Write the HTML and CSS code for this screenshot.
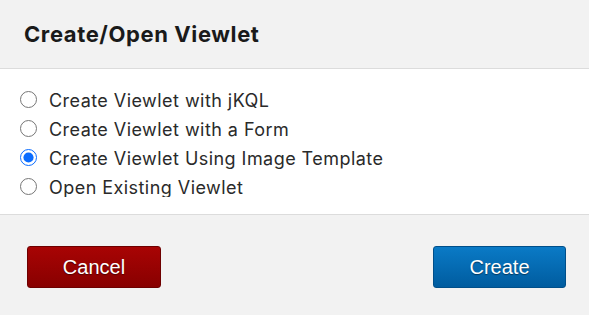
FILE: index.html
```html
<!DOCTYPE html>
<html>
<head>
<meta charset="utf-8">
<link rel="stylesheet" href="styles.css">
</head>
<body>
<div class="dialog">
  <div class="header"><h1 class="title">Create/Open Viewlet</h1></div>
  <div class="content">
    <div class="options">
      <label class="option"><input type="radio" name="mode"><span>Create Viewlet with jKQL</span></label>
      <label class="option"><input type="radio" name="mode"><span>Create Viewlet with a Form</span></label>
      <label class="option"><input type="radio" name="mode" checked><span>Create Viewlet Using Image Template</span></label>
      <label class="option"><input type="radio" name="mode"><span>Open Existing Viewlet</span></label>
    </div>
  </div>
  <div class="footer">
    <button class="btn btn-cancel">Cancel</button>
    <button class="btn btn-create">Create</button>
  </div>
</div>
</body>
</html>
```
FILE: styles.css
```css
html, body {
  margin: 0;
  padding: 0;
  background: #ffffff;
}
.dialog {
  width: 589px;
  height: 315px;
  display: flex;
  flex-direction: column;
  font-family: Inter, "Noto Sans", sans-serif;
  color: #222;
}
.header {
  background: #f2f2f2;
  height: 69px;
  border-bottom: 1px solid #dcdcdc;
  display: flex;
  align-items: center;
  padding: 0 0 1px 24px;
  box-sizing: border-box;
  flex: none;
}
.title {
  margin: 0;
  font-size: 22px;
  font-weight: 700;
  color: #1a1a1a;
  letter-spacing: 0.6px;
}
.content {
  height: 146px;
  flex: none;
  box-sizing: border-box;
  border-bottom: 1px solid #dcdcdc;
  padding: 16px 0 0 20px;
}
.options {
  height: 112px;
  overflow: hidden;
  display: flex;
  flex-direction: column;
}
.option {
  display: flex;
  align-items: center;
  gap: 12px;
  height: 29px;
  flex: none;
  font-size: 18px;
  letter-spacing: 0.45px;
  color: #2a2a2a;
}
.option span {
  padding-top: 2px;
}
.option input {
  width: 17px;
  height: 17px;
  margin: 0;
  accent-color: #0a6cff;
}
.footer {
  flex: 1;
  background: #f2f2f2;
  display: flex;
  justify-content: space-between;
  align-items: flex-start;
  padding: 31px 23px 0 27px;
}
.btn {
  height: 42px;
  border-radius: 3px;
  font-family: "Liberation Sans", Arial, sans-serif;
  font-size: 20px;
  color: #fff;
  text-shadow: 0 1px 1px rgba(0,0,0,0.45);
  padding: 0;
}
.btn-cancel {
  width: 134px;
  background: linear-gradient(#a80404, #880000);
  border: 1px solid #6e0000;
}
.btn-create {
  width: 133px;
  background: linear-gradient(#0a7ac6, #005c9f);
  border: 1px solid #004f8a;
}
```
